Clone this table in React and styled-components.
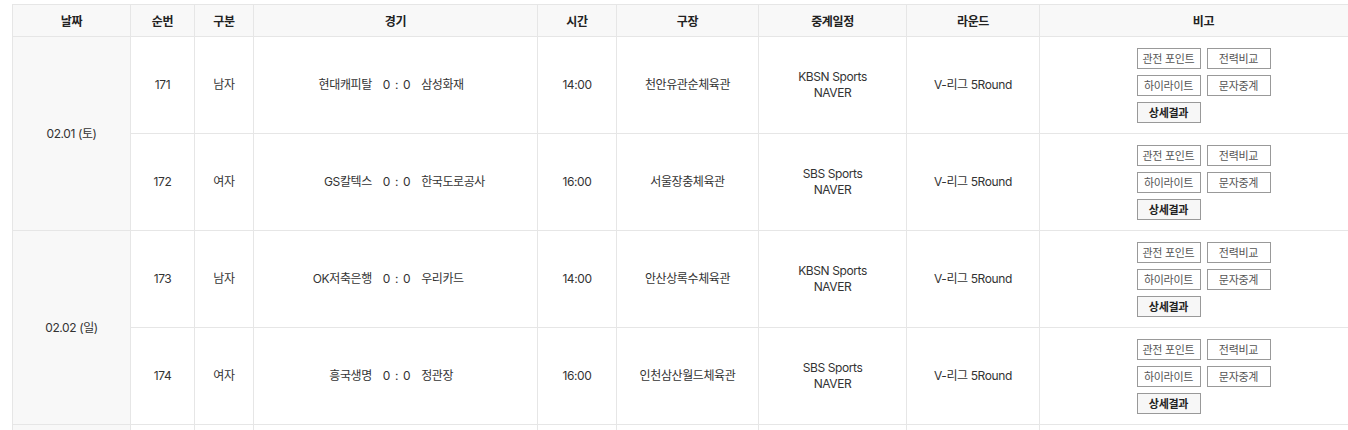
import React from "react";
import styled, { createGlobalStyle } from "styled-components";

const GlobalStyle = createGlobalStyle`
    html, body {
        margin: 0;
        padding: 0;
        background: #fff;
        overflow: hidden;
    }
    body {
        padding: 4px 0 0 12px;
        font-family: Inter, "Noto Sans CJK KR", sans-serif;
        color: #333;
    }
`;

const Table = styled.table`
    width: 1355px;
    table-layout: fixed;
    border-collapse: collapse;
    font-size: 12px;
    letter-spacing: -0.4px;
`;
const HeadCell = styled.th`
    height: 31px;
    padding: 0;
    background: #f8f8f8;
    border: 1px solid #e6e6e6;
    font-weight: 600;
    color: #222;
    text-align: center;
`;
const Cell = styled.td`
    height: 96px;
    padding: 0;
    border: 1px solid #e6e6e6;
    text-align: center;
    vertical-align: middle;
    line-height: 16px;
    color: #333;
`;
const DateCell = styled(Cell)`
    background: #f8f8f8;
`;
const MatchLine = styled.div`
    display: grid;
    grid-template-columns: 1fr auto 1fr;
    column-gap: 11px;
    align-items: center;
    padding-left: 2px;
`;
const Team = styled.span`
    text-align: ${p => (p.$away ? "left" : "right")};
    white-space: nowrap;
`;
const Score = styled.span`
    word-spacing: 2px;
`;
const ButtonGrid = styled.div`
    width: 134px;
    margin: 0 auto;
    display: grid;
    grid-template-columns: 64px 64px;
    column-gap: 6px;
    row-gap: 6px;
`;
const ActionButton = styled.button`
    width: 64px;
    height: 21px;
    padding: 0;
    border: 1px solid #999;
    border-radius: 0;
    background: ${p => (p.$primary ? "#f7f7f7" : "#fff")};
    color: ${p => (p.$primary ? "#222" : "#555")};
    font-family: Inter, "Noto Sans CJK KR", sans-serif;
    font-size: 11px;
    font-weight: ${p => (p.$primary ? 600 : 400)};
    letter-spacing: -0.3px;
    cursor: pointer;
`;

const columns = [
    ["날짜", 118],
    ["순번", 64],
    ["구분", 59],
    ["경기", 284],
    ["시간", 79],
    ["구장", 142],
    ["중계일정", 148],
    ["라운드", 133],
    ["비고", 328],
];

const days = [
    {
        date: "02.01 (토)",
        games: [
            { no: 171, kind: "남자", home: "현대캐피탈", away: "삼성화재", time: "14:00", place: "천안유관순체육관", tv: "KBSN Sports" },
            { no: 172, kind: "여자", home: "GS칼텍스", away: "한국도로공사", time: "16:00", place: "서울장충체육관", tv: "SBS Sports" },
        ],
    },
    {
        date: "02.02 (일)",
        games: [
            { no: 173, kind: "남자", home: "OK저축은행", away: "우리카드", time: "14:00", place: "안산상록수체육관", tv: "KBSN Sports" },
            { no: 174, kind: "여자", home: "흥국생명", away: "정관장", time: "16:00", place: "인천삼산월드체육관", tv: "SBS Sports" },
        ],
    },
    {
        date: "02.03 (월)",
        games: [
            { no: 175, kind: "남자", home: "한국전력", away: "대한항공", time: "19:00", place: "수원실내체육관", tv: "KBSN Sports" },
        ],
    },
];

const GameCells = ({ game }) => (
    <>
        <Cell>{game.no}</Cell>
        <Cell>{game.kind}</Cell>
        <Cell>
            <MatchLine>
                <Team>{game.home}</Team>
                <Score>0 : 0</Score>
                <Team $away>{game.away}</Team>
            </MatchLine>
        </Cell>
        <Cell>{game.time}</Cell>
        <Cell>{game.place}</Cell>
        <Cell>
            {game.tv}
            <br />
            NAVER
        </Cell>
        <Cell>V-리그 5Round</Cell>
        <Cell>
            <ButtonGrid>
                <ActionButton>관전 포인트</ActionButton>
                <ActionButton>전력비교</ActionButton>
                <ActionButton>하이라이트</ActionButton>
                <ActionButton>문자중계</ActionButton>
                <ActionButton $primary>상세결과</ActionButton>
            </ButtonGrid>
        </Cell>
    </>
);

const App = () => (
    <>
        <GlobalStyle />
        <Table>
            <colgroup>
                {columns.map(([name, w]) => (
                    <col key={name} style={{ width: w }} />
                ))}
            </colgroup>
            <thead>
                <tr>
                    {columns.map(([name]) => (
                        <HeadCell key={name}>{name}</HeadCell>
                    ))}
                </tr>
            </thead>
            <tbody>
                {days.map(day =>
                    day.games.map((game, i) => (
                        <tr key={game.no}>
                            {i === 0 && (
                                <DateCell rowSpan={day.games.length}>{day.date}</DateCell>
                            )}
                            <GameCells game={game} />
                        </tr>
                    ))
                )}
            </tbody>
        </Table>
    </>
);

export default App;
